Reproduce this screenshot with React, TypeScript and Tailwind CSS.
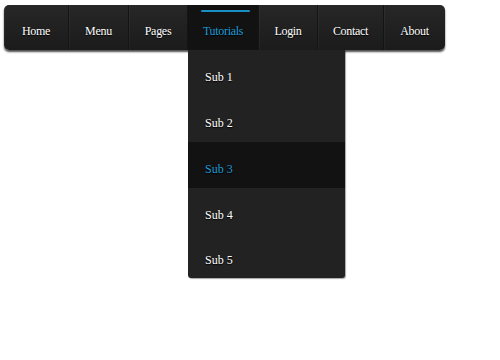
import { useState } from "react";

const navItems = [
  { label: "Home", width: "w-[64px]" },
  { label: "Menu", width: "w-[60px]" },
  { label: "Pages", width: "w-[59px]" },
  { label: "Tutorials", width: "w-[71px]", active: true },
  { label: "Login", width: "w-[59px]" },
  { label: "Contact", width: "w-[66px]" },
  { label: "About", width: "w-[62px]" },
];

const subItems = ["Sub 1", "Sub 2", "Sub 3", "Sub 4", "Sub 5"];

export default function App() {
  const [hovered] = useState("Sub 3");

  return (
    <div className="w-[500px] h-[360px] bg-white pt-[5px] pl-[4px] font-['Liberation_Serif',serif]">
      <nav className="flex w-[441px] h-[45px] rounded-[5px] bg-gradient-to-b from-[#272727] to-[#1b1b1b] shadow-[0_2px_2px_rgba(0,0,0,0.7)]">
        {navItems.map((item, i) => (
          <div
            key={item.label}
            className={`relative flex items-center justify-center pt-[7px] ${item.width} ${
              i > 0 ? "border-l border-[#141414]" : ""
            } ${i === 0 ? "rounded-l-[5px]" : ""} ${
              i === navItems.length - 1 ? "rounded-r-[5px]" : ""
            } ${item.active ? "bg-[#121212]" : "shadow-[inset_1px_0_0_rgba(255,255,255,0.04)]"}`}
          >
            {item.active && (
              <span className="absolute top-[5px] left-[13px] right-[8px] h-[2px] rounded-full bg-[#1a8fc4]" />
            )}
            <span
              className={`text-[12px] tracking-[-0.3px] [text-shadow:0_1px_1px_#000] ${
                item.active ? "text-[#1e9bd7]" : "text-white"
              }`}
            >
              {item.label}
            </span>
            {item.active && (
              <ul className="absolute left-0 top-[45px] w-[157px] bg-[#222222] rounded-b-[3px] shadow-[1px_1px_1px_rgba(0,0,0,0.35)] z-10">
                {subItems.map((sub, j) => (
                  <li
                    key={sub}
                    className={`flex items-center pl-[17px] pt-[7px] text-[12px] [text-shadow:0_1px_1px_#000] ${
                      j === subItems.length - 1 ? "h-[44px] rounded-b-[3px]" : "h-[46px]"
                    } ${sub === hovered ? "bg-[#121212] text-[#1e9bd7]" : "text-white"}`}
                  >
                    {sub}
                  </li>
                ))}
              </ul>
            )}
          </div>
        ))}
      </nav>
    </div>
  );
}
